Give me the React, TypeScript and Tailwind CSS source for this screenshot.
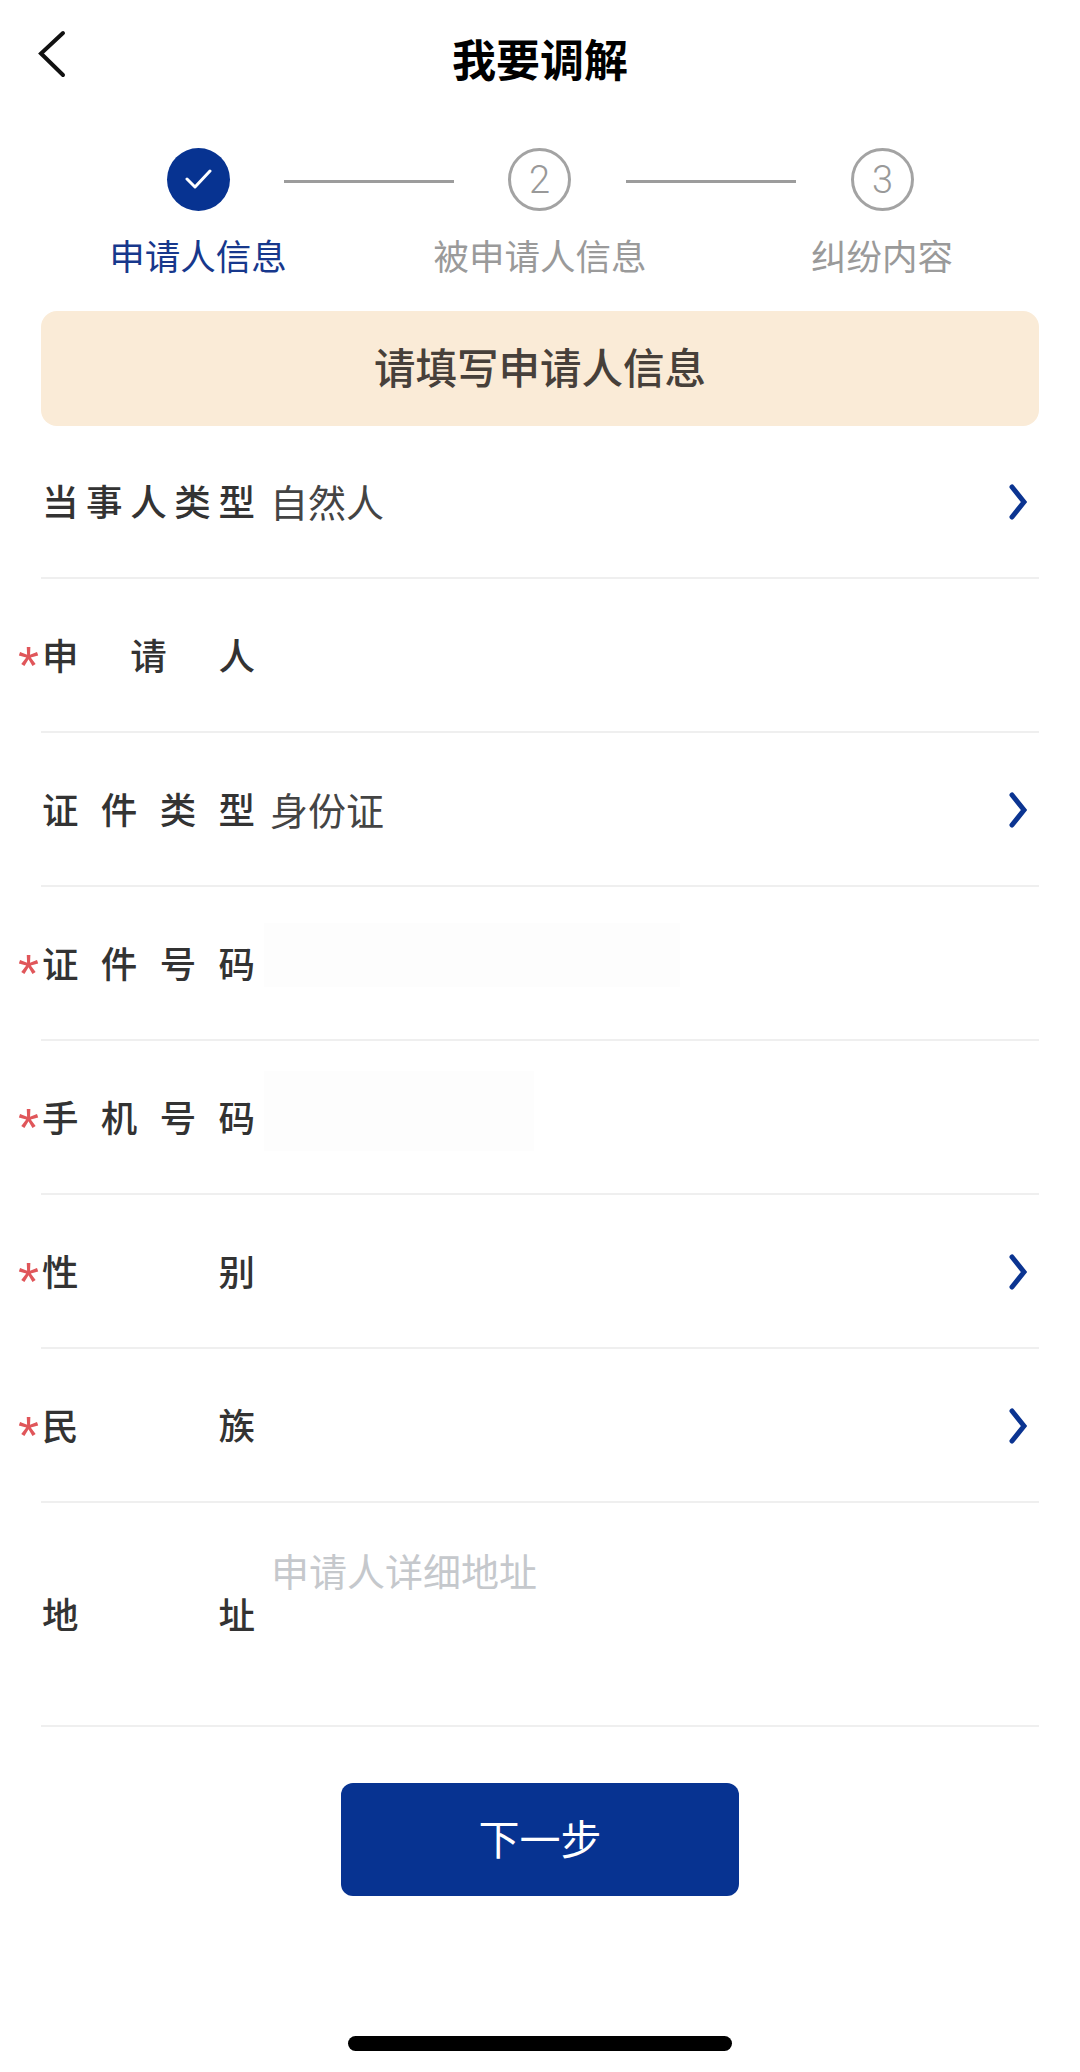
const cjk = 'font-["Noto_Sans_CJK_SC","Noto_Sans",sans-serif]'

function ChevronRight() {
  return (
    <svg width="18" height="36" viewBox="0 0 18 36" fill="none" className="mt-[2px] shrink-0">
      <path d="M3 3 L15 18 L3 33" stroke="#0b3491" strokeWidth="5" strokeLinecap="round" strokeLinejoin="miter" />
    </svg>
  )
}

function Step({ n, done }: { n?: number; done?: boolean }) {
  if (done) {
    return (
      <div className="flex h-[63px] w-[63px] shrink-0 items-center justify-center rounded-full bg-[#073391]">
        <svg width="27" height="20" viewBox="0 0 27 20" fill="none" className="mb-[2px]">
          <path d="M2 10 L10 18 L25 2" stroke="white" strokeWidth="3" strokeLinecap="round" strokeLinejoin="round" />
        </svg>
      </div>
    )
  }
  return (
    <div className="flex h-[63px] w-[63px] shrink-0 items-center justify-center rounded-full border-[3px] border-[#a3a3a3] font-['Roboto',sans-serif] text-[38px] font-light leading-none text-[#999]">
      {n}
    </div>
  )
}

function Row({
  label,
  value,
  required,
  arrow,
  patch,
}: {
  label: string
  value?: string
  required?: boolean
  arrow?: boolean
  patch?: string
}) {
  return (
    <div className="relative flex h-[154px] items-center border-b-2 border-[#efefef] pr-[12px]">
      {required && (
        <span className="absolute left-[-23px] top-[59px] font-['Liberation_Sans',sans-serif] text-[54px] leading-[54px] text-[#e0565a]">
          *
        </span>
      )}
      <div className="ml-[1px] w-[213px] shrink-0 text-[36.5px] font-medium leading-none text-[#333] [text-align-last:justify]">
        {label}
      </div>
      <div className="ml-[15px] flex-1 text-[38px] leading-none text-[#444]">
        {value}
        {patch && <div className={patch} />}
      </div>
      {arrow && <ChevronRight />}
    </div>
  )
}

export default function App() {
  return (
    <div className={`flex h-[2072px] w-[1080px] flex-col overflow-hidden bg-white ${cjk}`}>
      <header className="relative flex h-[124px] items-start justify-center pt-[32px]">
        <svg width="30" height="48" viewBox="0 0 30 48" fill="none" className="absolute left-[38px] top-[30px]">
          <path d="M25 3 L3 23.5 L25 45" stroke="#111" strokeWidth="4" strokeLinecap="round" strokeLinejoin="miter" />
        </svg>
        <h1 className="text-[44px] font-bold leading-[52px] text-black">我要调解</h1>
      </header>

      <div className="flex items-center pl-[167px] pt-[24px]">
        <Step done />
        <div className="mx-[54px] mt-[4px] h-[3px] w-[170px] bg-[#9c9c9c]" />
        <Step n={2} />
        <div className="mx-[55px] mt-[4px] h-[3px] w-[170px] bg-[#9c9c9c]" />
        <Step n={3} />
      </div>

      <div className="ml-[27px] mt-[20px] grid w-[1026px] grid-cols-3 text-center text-[35.5px] leading-[48px]">
        <div className="text-[#17388c]">申请人信息</div>
        <div className="text-[#9a9a9a]">被申请人信息</div>
        <div className="text-[#9a9a9a]">纠纷内容</div>
      </div>

      <div className="mx-[41px] mt-[32px] flex h-[115px] items-center justify-center rounded-[16px] bg-[#faebd7] pb-[3px] text-[41.5px] font-medium leading-none text-[#47403a]">
        请填写申请人信息
      </div>

      <div className="mx-[41px] -mt-[1px] flex flex-col">
        <Row label="当事人类型" value="自然人" arrow />
        <Row label="申请人" required />
        <Row label="证件类型" value="身份证" arrow />
        <Row label="证件号码" required patch="-ml-[6px] mb-[16px] h-[64px] w-[416px] bg-[#fdfdfd]" />
        <Row label="手机号码" required patch="-ml-[6px] mb-[12px] h-[80px] w-[270px] bg-[#fdfdfd]" />
        <Row label="性别" required arrow />
        <Row label="民族" required arrow />
        <div className="flex h-[224px] items-center border-b-2 border-[#efefef]">
          <div className="ml-[1px] w-[213px] shrink-0 text-[36.5px] font-medium leading-none text-[#333] [text-align-last:justify]">
            地址
          </div>
          <div className="mb-[88px] ml-[16px] text-[38px] leading-none text-[#c5c8cc]">申请人详细地址</div>
        </div>
      </div>

      <button className="mx-auto mt-[56px] h-[113px] w-[398px] rounded-[12px] bg-[#073391] pb-[4px] text-[41px] leading-none text-white">
        下一步
      </button>

      <div className="mx-auto mt-[140px] h-[15px] w-[384px] rounded-full bg-black" />
    </div>
  )
}
